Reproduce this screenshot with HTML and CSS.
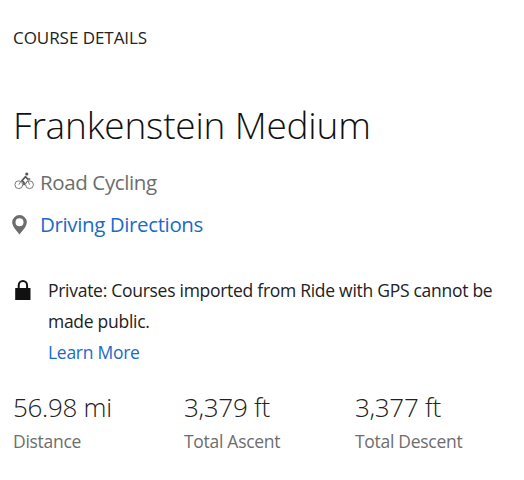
FILE: index.html
```html
<!DOCTYPE html>
<html lang="en">
<head>
    <meta charset="UTF-8">
    <meta name="viewport" content="width=device-width, initial-scale=1.0">
    <title>Course Details</title>
    <link rel="stylesheet" href="styles.css">
</head>
<body>
    <main class="course">
        <h2 class="section-title">COURSE DETAILS</h2>
        <h1 class="course-name">Frankenstein Medium</h1>

        <div class="course-type">
            <svg class="icon-bike" viewBox="0 0 20 18" width="20" height="18">
                <g fill="none" stroke="#777" stroke-width="1">
                    <circle cx="4.800" cy="12.700" r="3.900"/>
                    <circle cx="15.500" cy="12.700" r="3.900"/>
                    <path d="M4.800 12.700 7.500 8.500 M15.500 12.700 13.600 7.500 M10.300 12.700 13.800 8.800"/>
                </g>
                <path fill="none" stroke="#555" stroke-width="1.700" stroke-linejoin="round" d="M10 13.200V10.600L8 8.500l3.600-3.800 2 2.300h2.600"/>
                <circle cx="12.800" cy="2" r="1.600" fill="#555"/>
            </svg>
            <span>Road Cycling</span>
        </div>
        <div class="directions">
            <svg class="icon-pin" viewBox="0 0 16 20" width="16" height="20">
                <path fill="#6d6d6d" fill-rule="evenodd" d="M7.500 0A7.300 7.300 0 0 0 .2 7.300C.2 11.500 4.500 15.500 7.500 19.500c3-4 7.300-8 7.300-12.200A7.300 7.300 0 0 0 7.500 0zm0 3.300a4 4 0 1 1 0 8 4 4 0 0 1 0-8z"/>
            </svg>
            <a href="#">Driving Directions</a>
        </div>

        <div class="privacy">
            <svg class="icon-lock" viewBox="0 0 16 20" width="16" height="20">
                <path fill="none" stroke="#111" stroke-width="2" d="M3.700 9V5.400a4.200 4.400 0 0 1 8.400 0V9"/>
                <rect x=".2" y="8" width="15.300" height="12" rx=".3" fill="#111"/>
            </svg>
            <div class="privacy-text">
                <p>Private: Courses imported from Ride with GPS cannot be made public.</p>
                <a href="#">Learn More</a>
            </div>
        </div>

        <div class="stats">
            <div class="stat">
                <div class="stat-value">56.98 mi</div>
                <div class="stat-label">Distance</div>
            </div>
            <div class="stat">
                <div class="stat-value">3,379 ft</div>
                <div class="stat-label">Total Ascent</div>
            </div>
            <div class="stat">
                <div class="stat-value">3,377 ft</div>
                <div class="stat-label">Total Descent</div>
            </div>
        </div>
    </main>
</body>
</html>
```

FILE: styles.css
```css
body {
    margin: 0;
    background-color: #fff;
    color: #222;
    font-family: "Open Sans", Arial, sans-serif;
}
h1, h2, p {
    margin: 0;
}
a {
    color: #1b6ac9;
    text-decoration: none;
}
.course {
    padding: 26px 0 0 13px;
}
.section-title {
    font-size: 17px;
    font-weight: 400;
    line-height: 24px;
    letter-spacing: -0.05px;
}
.course-name {
    margin-top: 47px;
    font-size: 37px;
    font-weight: 300;
    line-height: 56px;
    letter-spacing: -0.2px;
    color: #111;
}
.course-type, .directions {
    display: flex;
    align-items: center;
    font-size: 20.5px;
    line-height: 28px;
    letter-spacing: -0.38px;
}
.course-type {
    margin-top: 15px;
    gap: 6px;
    color: #6d6d6d;
}
.icon-bike {
    margin: 0 0 3px 1px;
}
.directions {
    margin-top: 14px;
    gap: 12px;
}
.icon-pin {
    margin: 1px 0 0 -1px;
}
.privacy {
    display: flex;
    margin-top: 37px;
    font-size: 17.5px;
    line-height: 31px;
    letter-spacing: -0.28px;
}
.icon-lock {
    flex: none;
    margin: 5px 17px 0 2px;
}
.stats {
    display: grid;
    grid-template-columns: repeat(3, 171px);
    margin-top: 21px;
}
.stat-value {
    font-size: 26px;
    font-weight: 300;
    line-height: 36px;
    letter-spacing: -0.3px;
}
.stat-label {
    margin-top: 4px;
    font-size: 17.5px;
    line-height: 24px;
    letter-spacing: -0.29px;
    color: #6d6d6d;
}
```
